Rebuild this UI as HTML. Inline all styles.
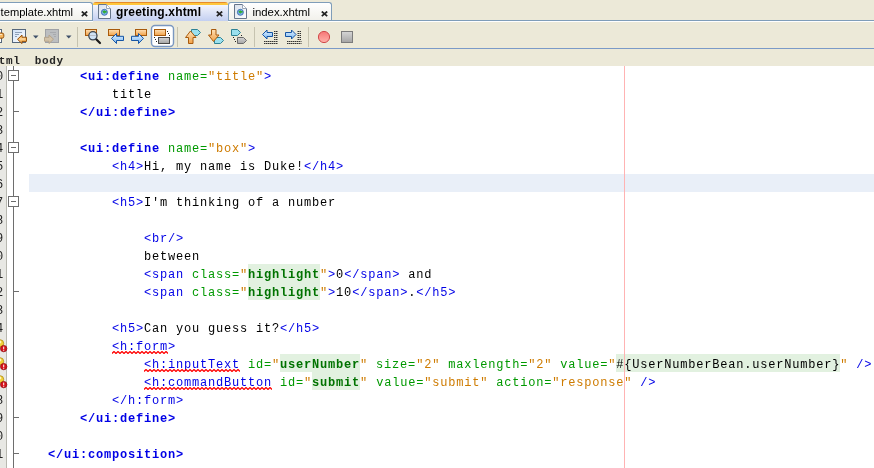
<!DOCTYPE html>
<html><head><meta charset="utf-8"><title>greeting.xhtml</title>
<style>
*{margin:0;padding:0;box-sizing:border-box}
html,body{width:874px;height:468px;overflow:hidden;background:#ece9d8}
body{position:relative;font-family:"Liberation Sans",sans-serif}
.abs{position:absolute}
#root{position:absolute;left:0;top:0;width:874px;height:468px;overflow:hidden;will-change:transform}
/* tabs */
.tab{position:absolute;top:2px;height:19px;border:1px solid #7f9db9;border-bottom:none;border-radius:3px 3px 0 0;background:linear-gradient(#ffffff,#f1f0ea);font-size:11px;line-height:13px;color:#000;white-space:nowrap}
.tab .tx{position:absolute;top:3px}
.tab .cl{position:absolute;top:9px}
.tabline{position:absolute;left:0;top:20px;width:874px;height:1px;background:#7f9db9}
.tabline2{position:absolute;left:0;top:21px;width:874px;height:1px;background:#fff}
.sel{position:absolute;left:93px;top:2px;width:135px;height:19px;border-radius:3px 3px 0 0;background:linear-gradient(#e68b2c 0,#e68b2c 1px,#ffc73c 1px,#ffc73c 3px,#f4f6fc 3px,#c3cff1 19px);font-size:11px;font-weight:bold;line-height:13px;white-space:nowrap}
/* toolbar */
.tbline{position:absolute;left:0;top:48px;width:874px;height:1px;background:#7b9ac7}
.sep{position:absolute;top:27px;width:1px;height:20px;background:#c6c3b0}
.crumb{position:absolute;left:0;top:49px;width:874px;height:17px;background:#ece9d8;font-family:"Liberation Mono",monospace;font-size:11px;letter-spacing:0.6px;line-height:17px;color:#000;white-space:pre}
/* editor */
.ed{position:absolute;left:7px;top:66px;width:867px;height:402px;background:#fff}
.gut{position:absolute;left:0;top:66px;width:6px;height:402px;background:#e8e8e4}
.gutl{position:absolute;left:6px;top:66px;width:1px;height:402px;background:#b8b8b0}
.cur{position:absolute;left:29px;top:174px;width:845px;height:18px;background:#e9eff8}
.margin{position:absolute;left:624px;top:66px;width:1px;height:402px;background:#ffb3b3}
.ln{position:absolute;height:18px;line-height:22px;font-family:"Liberation Mono",monospace;font-size:12px;letter-spacing:0.8px;white-space:pre;color:#000}
.hl{position:absolute;height:18px;background:#e2f1e0}
.t{color:#0000e6;font-weight:bold}
.p{color:#0000e6}
.e{color:#0000e6}
.a{color:#009900}
.v{color:#ce7b00}
.x{color:#000}
.h{color:#007200;font-weight:bold}
.l{color:#000}
.num{position:absolute;left:-4.1px;width:8px;height:18px;line-height:22px;font-family:"Liberation Mono",monospace;font-size:12px;color:#222}
.err{position:absolute;left:0}
.fline{position:absolute;left:13px;top:66px;width:1px;height:402px;background:#6e6e6e}
.fbox{position:absolute;left:8px;width:11px;height:11px;border:1px solid #6e6e6e;background:#fff}
.fbox i{position:absolute;left:2px;top:4px;width:5px;height:1px;background:#6a6a6a}
.ftick{position:absolute;left:13px;width:6px;height:1px;background:#6e6e6e}
.wave{position:absolute}
</style></head><body><div id="root">

<div class="tab" style="left:-10px;width:103px"><span class="tx" style="left:9.6px;font-size:11.15px">template.xhtml</span></div>
<svg class="abs" style="left:81px;top:11px" width="7" height="6" viewBox="0 0 7 6"><path d="M0.8 0.5L6.2 5.2M6.2 0.5L0.8 5.2" stroke="#222" stroke-width="1.7" fill="none"/></svg>
<div class="tab" style="left:228px;width:104px"><span class="tx" style="left:23.4px;font-size:11.4px">index.xhtml</span></div>
<div class="tabline"></div><div class="tabline2" style="width:93px"></div><div class="tabline2" style="left:228px;width:646px"></div>
<div class="sel"><span class="abs" style="left:23px;top:3.5px;font-size:12px;letter-spacing:0.18px">greeting.xhtml</span></div>
<svg class="abs" style="left:98px;top:4px" width="13" height="15" viewBox="0 0 13 15"><defs><linearGradient id="dc98" x1="0" y1="0" x2="1" y2="1"><stop offset="0" stop-color="#d8e0ec"/><stop offset="1" stop-color="#ffffff"/></linearGradient></defs><path d="M0.5 0.5H8.5L12.5 4.5V14.5H0.5Z" fill="url(#dc98)" stroke="#66758a"/><path d="M8.5 0.5V4.5H12.5" fill="#fff" stroke="#9aa6b8"/><circle cx="6.4" cy="8.3" r="3" fill="#7db0e8" stroke="#3a6cb0" stroke-width="0.9"/><path d="M4.4 7.8L6.6 5.8V7H8.6V8.8H6.6V9.9Z" fill="#2fae2f"/></svg>
<svg class="abs" style="left:216px;top:11px" width="7" height="6" viewBox="0 0 7 6"><path d="M0.8 0.5L6.2 5.2M6.2 0.5L0.8 5.2" stroke="#222" stroke-width="1.7" fill="none"/></svg>
<svg class="abs" style="left:234px;top:4px" width="13" height="15" viewBox="0 0 13 15"><defs><linearGradient id="dc234" x1="0" y1="0" x2="1" y2="1"><stop offset="0" stop-color="#d8e0ec"/><stop offset="1" stop-color="#ffffff"/></linearGradient></defs><path d="M0.5 0.5H8.5L12.5 4.5V14.5H0.5Z" fill="url(#dc234)" stroke="#66758a"/><path d="M8.5 0.5V4.5H12.5" fill="#fff" stroke="#9aa6b8"/><circle cx="6.4" cy="8.3" r="3" fill="#7db0e8" stroke="#3a6cb0" stroke-width="0.9"/><path d="M4.4 7.8L6.6 5.8V7H8.6V8.8H6.6V9.9Z" fill="#2fae2f"/></svg>
<svg class="abs" style="left:321px;top:11px" width="7" height="6" viewBox="0 0 7 6"><path d="M0.8 0.5L6.2 5.2M6.2 0.5L0.8 5.2" stroke="#222" stroke-width="1.7" fill="none"/></svg>

<svg class="abs" style="left:0;top:22px" width="874" height="26" viewBox="0 22 874 26">
<defs>
<linearGradient id="og" x1="0" y1="0" x2="0" y2="1"><stop offset="0" stop-color="#fde0b6"/><stop offset="1" stop-color="#f2a248"/></linearGradient>
<linearGradient id="bg" x1="0" y1="0" x2="0" y2="1"><stop offset="0" stop-color="#e4f2ff"/><stop offset="1" stop-color="#7ab8f4"/></linearGradient>
<linearGradient id="gg" x1="0" y1="0" x2="0" y2="1"><stop offset="0" stop-color="#d6d6d6"/><stop offset="1" stop-color="#a4a4a4"/></linearGradient>
<linearGradient id="rg" x1="0" y1="0" x2="0" y2="1"><stop offset="0" stop-color="#f67676"/><stop offset="1" stop-color="#ffb2aa"/></linearGradient>
<linearGradient id="dg" x1="0" y1="0" x2="1" y2="1"><stop offset="0" stop-color="#cfe0f6"/><stop offset="1" stop-color="#ffffff"/></linearGradient>
</defs>
<!-- partial last-edit icon -->
<rect x="-6" y="29.500" width="7.500" height="13" fill="#fff" stroke="#56677c"/>
<path d="M-4 33H2Q3.800 33 3.800 34.800V36.400Q3.800 38.200 2 38.200H-4Z" fill="#f6b860" stroke="#96500a" stroke-width="1"/>
<path d="M-2 34.500H2" stroke="#fde6c4" stroke-width="1"/>
<!-- back -->
<rect x="12.500" y="29.500" width="13" height="13" fill="url(#dg)" stroke="#56677c"/>
<path d="M15 32.500H22M15 34.500H19M15 36.500H17" stroke="#8ea0b8" stroke-width="1"/>
<path d="M17.500 39.300L22 35V37.200H26.500V41.400H22V43.600Z" fill="#f8bc68" stroke="#96500a" stroke-width="1" stroke-linejoin="round"/>
<path d="M19.500 39H25" stroke="#fde2b8" stroke-width="1"/>
<path d="M33 35.5H38.5L35.75 38.5Z" fill="#3d4f68"/>
<!-- fwd disabled -->
<rect x="45.5" y="29.5" width="13" height="13" fill="#bcbec0" stroke="#a0a2a6"/>
<path d="M50 32.5H56M53 34.5H56M54 36.5H56" stroke="#a8aaae" stroke-width="1"/>
<path d="M53.5 39.2L49 35V37.3H44.5V41.2H49V43.5Z" fill="#d2c2a8" stroke="#b4a48c" stroke-width="1" stroke-linejoin="round"/>
<path d="M66 35.5H71.5L68.75 38.5Z" fill="#3d4f68"/>
<!-- find selection -->
<rect x="85.5" y="29.5" width="11" height="6" fill="url(#og)" stroke="#a85a0c"/>
<path d="M95.5 38.5L100 43" stroke="#1a1a1a" stroke-width="2.2" stroke-linecap="round"/>
<circle cx="92.9" cy="35.8" r="4.1" fill="#cfe2f4" stroke="#3a4450" stroke-width="1.3"/>
<path d="M90 35.5H95.8" stroke="#b8bec8" stroke-width="1"/>
<!-- prev -->
<rect x="108.5" y="29.5" width="11" height="6" fill="url(#og)" stroke="#a85a0c"/>
<path d="M111.5 38.4L116.5 33.5V36.3H123.5V40.5H116.5V43.5Z" fill="url(#bg)" stroke="#1554a4" stroke-width="1" stroke-linejoin="round"/>
<!-- next -->
<rect x="135.5" y="29.5" width="11" height="6" fill="url(#og)" stroke="#a85a0c"/>
<path d="M143.5 38.4L138.5 33.5V36.3H131.5V40.5H138.5V43.5Z" fill="url(#bg)" stroke="#1554a4" stroke-width="1" stroke-linejoin="round"/>
<!-- toggle -->
<rect x="151.5" y="25.5" width="22" height="21" rx="3.5" fill="#fff" stroke="#7a97c0" stroke-width="1.4"/>
<rect x="154.5" y="29.5" width="11" height="6" fill="url(#og)" stroke="#a85a0c"/>
<rect x="158.5" y="37.5" width="11" height="6" fill="url(#gg)" stroke="#484848"/>
<path d="M154 37h1v1h-1zM155 39h1v1h-1zM156 41h1v1h-1zM167 31h1v1h-1zM168 33h1v1h-1zM169 35h1v1h-1z" fill="#222"/>
<!-- prev bookmark -->
<path d="M191.500 29.500H197.500L200.500 32.500L197.500 35.500H191.500Z" fill="#9be0ee" stroke="#2f8294"/>
<path d="M190.500 31L196 37.500H193V43.500H188.500V37.500H185.500Z" fill="url(#og)" stroke="#a85a0c" stroke-linejoin="round"/>
<!-- next bookmark -->
<path d="M214.500 37.500H220.500L223.500 40.500L220.500 43.500H214.500Z" fill="#9be0ee" stroke="#2f8294"/>
<path d="M213.500 41.500L219 35H216V29.500H211.500V35H208.500Z" fill="url(#og)" stroke="#a85a0c" stroke-linejoin="round"/>
<!-- toggle bookmark -->
<path d="M231.500 29.500H237.500L240.500 32.500L237.500 35.500H231.500Z" fill="#9be0ee" stroke="#2f8294"/>
<path d="M237.500 37.500H243.500L246.500 40.500L243.500 43.500H237.500Z" fill="url(#gg)" stroke="#6a6a6a"/>
<path d="M233 37h1v1h-1zM234 39h1v1h-1zM235 41h1v1h-1zM241 35h1v1h-1z" fill="#222"/>
<!-- shift left -->
<path d="M262.500 34.500L267 30V32.500H272.500V36.500H267V39Z" fill="url(#bg)" stroke="#1554a4" stroke-linejoin="round"/>
<path d="M274 31.500H278M274 33.500H278M274 35.500H278M274 37.500H278M274 39.500H278" stroke="#333" stroke-width="1" stroke-dasharray="1.500 0.500"/>
<path d="M264 41.500H278M264 43.500H278" stroke="#333" stroke-width="1" stroke-dasharray="1.500 0.500"/>
<!-- shift right -->
<path d="M296 34.500L291.500 30V32.500H285.500V36.500H291.500V39Z" fill="url(#bg)" stroke="#1554a4" stroke-linejoin="round"/>
<path d="M297.500 31.500H301.500M297.500 33.500H301.500M297.500 35.500H301.500M297.500 37.500H301.500M297.500 39.500H301.500" stroke="#333" stroke-width="1" stroke-dasharray="1.500 0.500"/>
<path d="M287 41.500H301.500M287 43.500H301.500" stroke="#333" stroke-width="1" stroke-dasharray="1.500 0.500"/>
<!-- record / stop -->
<circle cx="324" cy="37" r="5.600" fill="url(#rg)" stroke="#d04a4a"/>
<rect x="341.500" y="31.500" width="11" height="11" fill="url(#gg)" stroke="#7c7c7c"/>
</svg>
<div class="sep" style="left:77px"></div><div class="sep" style="left:177px"></div><div class="sep" style="left:254px"></div><div class="sep" style="left:308px"></div>
<div class="tbline"></div>
<div class="crumb"><span class="abs" style="left:-8.4px;top:4px;font-weight:bold;color:#262626">html  body</span></div>
<div class="gut"></div><div class="gutl"></div>
<div class="ed"></div>
<div class="cur"></div>
<div class="num" style="top:66px">0</div>
<div class="num" style="top:84px">1</div>
<div class="num" style="top:102px">2</div>
<div class="num" style="top:120px">3</div>
<div class="num" style="top:138px">4</div>
<div class="num" style="top:156px">5</div>
<div class="num" style="top:174px">6</div>
<div class="num" style="top:192px">7</div>
<div class="num" style="top:210px">8</div>
<div class="num" style="top:228px">9</div>
<div class="num" style="top:246px">0</div>
<div class="num" style="top:264px">1</div>
<div class="num" style="top:282px">2</div>
<div class="num" style="top:300px">3</div>
<div class="num" style="top:318px">4</div>
<svg class="err" style="top:337px" width="8" height="16" viewBox="0 0 8 16"><circle cx="0" cy="6.4" r="3.7" fill="#f2d23a" stroke="#b08a10" stroke-width="0.8"/><circle cx="-0.3" cy="5" r="1.6" fill="#fff6c0"/><circle cx="3.7" cy="11.6" r="3.2" fill="#d8141c" stroke="#8c0a10" stroke-width="0.7"/><rect x="3.2" y="9.6" width="1" height="2.6" fill="#fff"/><rect x="3.2" y="12.8" width="1" height="1" fill="#fff"/></svg>
<svg class="err" style="top:355px" width="8" height="16" viewBox="0 0 8 16"><circle cx="0" cy="6.4" r="3.7" fill="#f2d23a" stroke="#b08a10" stroke-width="0.8"/><circle cx="-0.3" cy="5" r="1.6" fill="#fff6c0"/><circle cx="3.7" cy="11.6" r="3.2" fill="#d8141c" stroke="#8c0a10" stroke-width="0.7"/><rect x="3.2" y="9.6" width="1" height="2.6" fill="#fff"/><rect x="3.2" y="12.8" width="1" height="1" fill="#fff"/></svg>
<svg class="err" style="top:373px" width="8" height="16" viewBox="0 0 8 16"><circle cx="0" cy="6.4" r="3.7" fill="#f2d23a" stroke="#b08a10" stroke-width="0.8"/><circle cx="-0.3" cy="5" r="1.6" fill="#fff6c0"/><circle cx="3.7" cy="11.6" r="3.2" fill="#d8141c" stroke="#8c0a10" stroke-width="0.7"/><rect x="3.2" y="9.6" width="1" height="2.6" fill="#fff"/><rect x="3.2" y="12.8" width="1" height="1" fill="#fff"/></svg>
<div class="num" style="top:390px">8</div>
<div class="num" style="top:408px">9</div>
<div class="num" style="top:426px">0</div>
<div class="num" style="top:444px">1</div>
<div class="fline"></div>
<div class="fbox" style="top:70px"><i></i></div>
<div class="fbox" style="top:142px"><i></i></div>
<div class="fbox" style="top:196px"><i></i></div>
<div class="ftick" style="top:111px"></div>
<div class="ftick" style="top:291px"></div>
<div class="ftick" style="top:417px"></div>
<div class="ftick" style="top:453px"></div>
<div class="ln" style="top:66px;left:80px"><span class="t">&lt;ui:define</span> <span class="a">name=</span><span class="v">"title"</span><span class="p">&gt;</span></div>
<div class="ln" style="top:84px;left:112px"><span class="x">title</span></div>
<div class="ln" style="top:102px;left:80px"><span class="t">&lt;/ui:define&gt;</span></div>
<div class="ln" style="top:138px;left:80px"><span class="t">&lt;ui:define</span> <span class="a">name=</span><span class="v">"box"</span><span class="p">&gt;</span></div>
<div class="ln" style="top:156px;left:112px"><span class="p">&lt;h4&gt;</span><span class="x">Hi, my name is Duke!</span><span class="p">&lt;/h4&gt;</span></div>
<div class="ln" style="top:192px;left:112px"><span class="p">&lt;h5&gt;</span><span class="x">I'm thinking of a number</span></div>
<div class="ln" style="top:228px;left:144px"><span class="p">&lt;br/&gt;</span></div>
<div class="ln" style="top:246px;left:144px"><span class="x">between</span></div>
<div class="hl" style="top:264px;left:248px;width:72px"></div>
<div class="ln" style="top:264px;left:144px"><span class="p">&lt;span</span> <span class="a">class=</span><span class="v">"</span><span class="h">highlight</span><span class="v">"</span><span class="p">&gt;</span><span class="x">0</span><span class="p">&lt;/span&gt;</span><span class="x"> and</span></div>
<div class="hl" style="top:282px;left:248px;width:72px"></div>
<div class="ln" style="top:282px;left:144px"><span class="p">&lt;span</span> <span class="a">class=</span><span class="v">"</span><span class="h">highlight</span><span class="v">"</span><span class="p">&gt;</span><span class="x">10</span><span class="p">&lt;/span&gt;</span><span class="x">.</span><span class="p">&lt;/h5&gt;</span></div>
<div class="ln" style="top:318px;left:112px"><span class="p">&lt;h5&gt;</span><span class="x">Can you guess it?</span><span class="p">&lt;/h5&gt;</span></div>
<div class="ln" style="top:336px;left:112px"><span class="e">&lt;h:form</span><span class="p">&gt;</span></div>
<div class="hl" style="top:354px;left:280px;width:80px"></div>
<div class="hl" style="top:354px;left:616px;width:224px"></div>
<div class="ln" style="top:354px;left:144px"><span class="e">&lt;h:inputText</span> <span class="a">id=</span><span class="v">"</span><span class="h">userNumber</span><span class="v">"</span> <span class="a">size=</span><span class="v">"2"</span> <span class="a">maxlength=</span><span class="v">"2"</span> <span class="a">value=</span><span class="v">"</span><span class="l">#{UserNumberBean.userNumber}</span><span class="v">"</span> <span class="p">/&gt;</span></div>
<div class="hl" style="top:372px;left:312px;width:48px"></div>
<div class="ln" style="top:372px;left:144px"><span class="e">&lt;h:commandButton</span> <span class="a">id=</span><span class="v">"</span><span class="h">submit</span><span class="v">"</span> <span class="a">value=</span><span class="v">"submit"</span> <span class="a">action=</span><span class="v">"response"</span> <span class="p">/&gt;</span></div>
<div class="ln" style="top:390px;left:112px"><span class="p">&lt;/h:form&gt;</span></div>
<div class="ln" style="top:408px;left:80px"><span class="t">&lt;/ui:define&gt;</span></div>
<div class="ln" style="top:444px;left:48px"><span class="t">&lt;/ui:composition&gt;</span></div>
<svg class="wave" style="left:112px;top:351px" width="56" height="3" viewBox="0 0 56 3"><polyline points="0,2.5 2,0.5 4,2.5 6,0.5 8,2.5 10,0.5 12,2.5 14,0.5 16,2.5 18,0.5 20,2.5 22,0.5 24,2.5 26,0.5 28,2.5 30,0.5 32,2.5 34,0.5 36,2.5 38,0.5 40,2.5 42,0.5 44,2.5 46,0.5 48,2.5 50,0.5 52,2.5 54,0.5 56,2.5" fill="none" stroke="#ff0000" stroke-width="1.25"/></svg><svg class="wave" style="left:144px;top:369px" width="96" height="3" viewBox="0 0 96 3"><polyline points="0,2.5 2,0.5 4,2.5 6,0.5 8,2.5 10,0.5 12,2.5 14,0.5 16,2.5 18,0.5 20,2.5 22,0.5 24,2.5 26,0.5 28,2.5 30,0.5 32,2.5 34,0.5 36,2.5 38,0.5 40,2.5 42,0.5 44,2.5 46,0.5 48,2.5 50,0.5 52,2.5 54,0.5 56,2.5 58,0.5 60,2.5 62,0.5 64,2.5 66,0.5 68,2.5 70,0.5 72,2.5 74,0.5 76,2.5 78,0.5 80,2.5 82,0.5 84,2.5 86,0.5 88,2.5 90,0.5 92,2.5 94,0.5 96,2.5" fill="none" stroke="#ff0000" stroke-width="1.25"/></svg><svg class="wave" style="left:144px;top:387px" width="128" height="3" viewBox="0 0 128 3"><polyline points="0,2.5 2,0.5 4,2.5 6,0.5 8,2.5 10,0.5 12,2.5 14,0.5 16,2.5 18,0.5 20,2.5 22,0.5 24,2.5 26,0.5 28,2.5 30,0.5 32,2.5 34,0.5 36,2.5 38,0.5 40,2.5 42,0.5 44,2.5 46,0.5 48,2.5 50,0.5 52,2.5 54,0.5 56,2.5 58,0.5 60,2.5 62,0.5 64,2.5 66,0.5 68,2.5 70,0.5 72,2.5 74,0.5 76,2.5 78,0.5 80,2.5 82,0.5 84,2.5 86,0.5 88,2.5 90,0.5 92,2.5 94,0.5 96,2.5 98,0.5 100,2.5 102,0.5 104,2.5 106,0.5 108,2.5 110,0.5 112,2.5 114,0.5 116,2.5 118,0.5 120,2.5 122,0.5 124,2.5 126,0.5 128,2.5" fill="none" stroke="#ff0000" stroke-width="1.25"/></svg>
<div class="margin"></div>
</div></body></html>
